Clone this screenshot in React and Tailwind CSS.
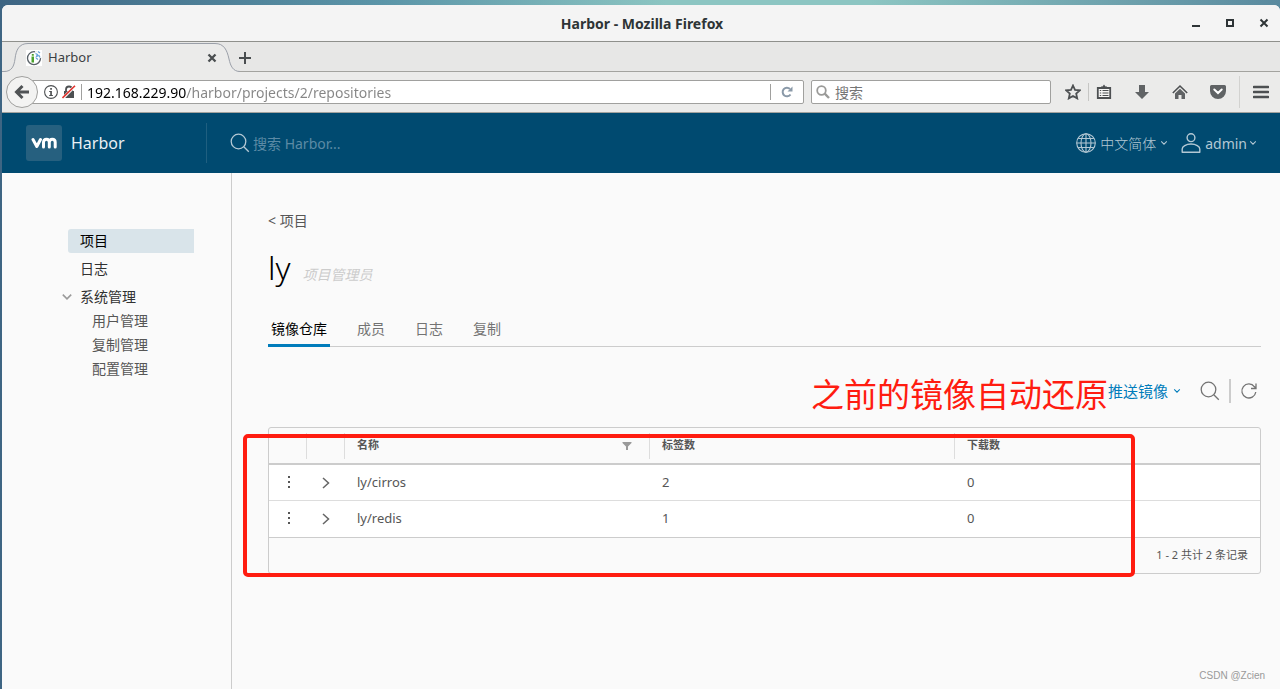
import React from "react";

const CHROME = "font-['Noto_Sans','Noto_Sans_CJK_SC',sans-serif]";

function Chevron({ className = "", dir = "down" }) {
  return dir === "down" ? (
    <svg viewBox="0 0 10 10" className={className} fill="none" stroke="currentColor" strokeWidth="1.300">
      <path d="M1.500 3 L5 6.500 L8.500 3" />
    </svg>
  ) : (
    <svg viewBox="0 0 10 12" className={className} fill="none" stroke="currentColor" strokeWidth="1.500">
      <path d="M2 1 L7.500 6 L2 11" />
    </svg>
  );
}

function SearchIcon({ className }) {
  return (
    <svg viewBox="0 0 20 20" className={className} fill="none" stroke="currentColor" strokeWidth="1.300">
      <circle cx="8.500" cy="8.500" r="7.300" />
      <path d="M13.800 13.800 L18.800 18.800" />
    </svg>
  );
}

function TitleBar() {
  return (
    <div className="grid h-[37px] grid-cols-[1fr_auto_1fr] items-center border-b border-[#8f908c] bg-[#f4f4f4] pr-[10px] pl-3">
      <span />
      <span className="text-[14px] font-bold text-[#2e3436]">Harbor - Mozilla Firefox</span>
      <div className="flex justify-end gap-[22px] text-[#2e3436]">
        <button aria-label="Minimize" className="h-3 w-3">
          <svg viewBox="0 0 12 12" className="h-3 w-3"><path d="M2 8h8v2H2z" fill="currentColor" /></svg>
        </button>
        <button aria-label="Maximize" className="h-3 w-3">
          <svg viewBox="0 0 12 12" className="h-3 w-3"><path d="M3 3h6v6H3z" fill="none" stroke="currentColor" strokeWidth="2" /></svg>
        </button>
        <button aria-label="Close" className="h-3 w-3">
          <svg viewBox="0 0 12 12" className="h-3 w-3"><path d="M2.500 2.500l7 7M9.500 2.500l-7 7" stroke="currentColor" strokeWidth="2" /></svg>
        </button>
      </div>
    </div>
  );
}

function TabStrip() {
  return (
    <div className="flex h-[30px] items-stretch border-b border-[#a3a39f] bg-[#e7e7e6]">
      <div className="relative -mb-px w-[237px]">
        <svg viewBox="0 0 238 30" className="absolute inset-0 h-[30px] w-[238px]">
          <path d="M0 30V29.500H2C10 29.500 12 24 13 17C14 8 17 1.500 26 1.500H213C222 1.500 225 8 227 17C228.500 24 231 29.500 238 29.500V30Z" fill="#ebebea" />
          <path d="M0 29.500H2C10 29.500 12 24 13 17C14 8 17 1.500 26 1.500H213C222 1.500 225 8 227 17C228.500 24 231 29.500 238 29.500" fill="none" stroke="#9a9fa8" />
        </svg>
        <div className="relative flex h-[32px] items-center pr-[22px] pl-6">
          <svg viewBox="0 0 16 16" className="h-4 w-4">
            <path d="M0 0h16v16H0z" fill="#fff" />
            <circle cx="8" cy="8.200" r="6.500" fill="none" stroke="#596168" strokeWidth="1.300" />
            <path d="M9 1l6 1v6l-5 1z" fill="#fff" />
            <path d="M9.500 3.500l2 1-1 2 2.500-1 1 2M12 1.500l2 1.500M10 8l2 1.500" stroke="#6aa5d9" strokeWidth="1.300" fill="none" />
            <path d="M5.500 6.500h2.500v6H5.500zM5.800 4h2v1.700h-2z" fill="#4da32f" />
          </svg>
          <span className="ml-[6px] flex-1 text-[13px] text-[#3b4043]">Harbor</span>
          <button aria-label="Close tab" className="text-[#4a4e50]">
            <svg viewBox="0 0 10 10" className="h-[10px] w-[10px]"><path d="M1.500 1.500l7 7M8.500 1.500l-7 7" stroke="currentColor" strokeWidth="2.300" /></svg>
          </button>
        </div>
      </div>
      <button aria-label="New tab" className="flex items-center pt-[3px] text-[#4a4e50]">
        <svg viewBox="0 0 12 12" className="h-3 w-3"><path d="M6 0v12M0 6h12" stroke="currentColor" strokeWidth="2" /></svg>
      </button>
    </div>
  );
}

function ToolButton({ label, children }) {
  return (
    <button aria-label={label} className="text-[#4d5052]">
      <svg viewBox="0 0 16 16" className="h-4 w-4">{children}</svg>
    </button>
  );
}

function NavBar() {
  return (
    <div className="flex h-[41px] items-center border-b border-[#a3a39f] bg-[#ebebea] pr-[11px] pl-1">
      <button aria-label="Back" className="z-10 flex h-8 w-8 shrink-0 items-center justify-center rounded-full border border-[#a0a09e] bg-[#f3f3f2] text-[#505355]">
        <svg viewBox="0 0 16 16" className="h-4 w-4"><path d="M8.500 2L2.500 8l6 6M2.500 8h12.500" fill="none" stroke="currentColor" strokeWidth="3" /></svg>
      </button>
      <div className="-ml-2 flex h-6 min-w-0 flex-1 items-center rounded-r-xs border border-[#a0a09e] bg-white pl-[13px]">
        <svg viewBox="0 0 14 14" className="h-[14px] w-[14px] shrink-0 text-[#4d5052]">
          <circle cx="7" cy="7" r="6.400" fill="none" stroke="currentColor" strokeWidth="1.100" />
          <path d="M6.200 3h1.700v1.700H6.200zM5.200 6h2.700v4h1v1H5.200v-1h1V7h-1z" fill="currentColor" />
        </svg>
        <svg viewBox="0 0 14 14" className="ml-1 h-[14px] w-[14px] shrink-0">
          <path d="M2 6h10v7H2z" fill="#4d5052" />
          <path d="M4 6V4.500a3 3 0 0 1 6 0V6" fill="none" stroke="#4d5052" strokeWidth="1.800" />
          <path d="M.5 13.500L13 1" stroke="#fff" strokeWidth="3" />
          <path d="M.5 13L13 .8" stroke="#e0322c" strokeWidth="1.600" />
        </svg>
        <div className="mx-[5px] h-4 w-px shrink-0 bg-[#a0a09e]" />
        <input
          aria-label="Address"
          defaultValue="192.168.229.90/harbor/projects/2/repositories"
          className="min-w-0 flex-1 bg-[linear-gradient(90deg,#000_99px,#858585_99px)] bg-clip-text text-[14px] text-transparent outline-none"
        />
        <div className="h-4 w-px bg-[#a0a09e]" />
        <button aria-label="Reload" className="flex w-8 justify-center text-[#8a99a8]">
          <svg viewBox="0 0 12 12" className="h-3 w-3">
            <path d="M9.500 8.500A4.300 4.300 0 1 1 9 3" fill="none" stroke="currentColor" strokeWidth="2" />
            <path d="M11.500 .5V5.500H6.500z" fill="currentColor" />
          </svg>
        </button>
      </div>
      <label className="ml-[7px] flex h-6 w-[240px] shrink-0 items-center rounded-xs border border-[#a0a09e] bg-white pl-1">
        <svg viewBox="0 0 14 14" className="h-[14px] w-[14px] text-[#9a9a98]">
          <circle cx="5.500" cy="5.500" r="4.300" fill="none" stroke="currentColor" strokeWidth="1.800" />
          <path d="M8.700 8.700L13 13" stroke="currentColor" strokeWidth="2.400" />
        </svg>
        <input aria-label="搜索" placeholder="搜索" className="ml-[5px] min-w-0 flex-1 text-[14px] text-[#333] outline-none placeholder:text-[#757575]" />
      </label>
      <div className="ml-[14px] flex shrink-0 items-center">
        <ToolButton label="Bookmark this page">
          <path d="M8 1.500l2 4.400 4.800.5-3.600 3.200 1 4.800L8 12l-4.200 2.400 1-4.800L1.200 6.400 6 5.900z" fill="none" stroke="currentColor" strokeWidth="1.800" />
        </ToolButton>
        <div className="mr-[7px] ml-[7px] h-[18px] w-px bg-[#c6c6c4]" />
        <ToolButton label="Show bookmarks">
          <path d="M1.800 4h12.400v10H1.800z" fill="#f6f6f5" stroke="currentColor" strokeWidth="1.800" />
          <path d="M5 4V2.500h1.500L8 .5l1.500 2H11V4z" fill="currentColor" />
          <path d="M3.800 6.500h1.400M3.800 9h1.400M3.800 11.500h1.400M6.500 6.500h6M6.500 9h6M6.500 11.500h6" stroke="currentColor" strokeWidth="1.200" />
        </ToolButton>
        <div className="ml-[22px] flex gap-[22px]">
          <ToolButton label="Downloads">
            <path d="M5 1h6v7h4l-7 7-7-7h4z" fill="#606365" />
          </ToolButton>
          <ToolButton label="Home">
            <path d="M.8 9L8 2l7.200 7" fill="none" stroke="currentColor" strokeWidth="1.600" />
            <path d="M3 9.500l5-4.800 5 4.800V15H9.500v-4h-3v4H3z" fill="#606365" />
          </ToolButton>
          <ToolButton label="Pocket">
            <path d="M1.500 1h13a1.500 1.500 0 0 1 1.500 1.500V7a8 8 0 0 1-16 0V2.500A1.500 1.500 0 0 1 1.500 1z" fill="#606365" />
            <path d="M4.300 5.500L8 9l3.700-3.500" fill="none" stroke="#fff" strokeWidth="2" strokeLinecap="round" />
          </ToolButton>
        </div>
        <div className="mr-[13px] ml-[13px] h-8 w-px bg-[#d2d2d0]" />
        <ToolButton label="Open menu">
          <path d="M1 3h14M1 8h14M1 13h14" stroke="currentColor" strokeWidth="2.600" strokeLinecap="round" />
        </ToolButton>
      </div>
    </div>
  );
}

function AppHeader() {
  return (
    <header className="flex h-[60px] items-center bg-[#004a70] pr-[23px] pl-6 text-[#b3c8d4]">
      <div className="flex w-[180px] items-center">
        <div className="flex h-9 w-9 items-center justify-center rounded-[3px] bg-[#26607f]">
          <svg viewBox="0 0 26 12" className="h-3 w-[26px]" fill="none" stroke="#fff" strokeWidth="3" strokeLinecap="round" strokeLinejoin="round">
            <path d="M2 2.500L5.800 9.500L9.500 2.500M12.500 10V5.200Q12.500 2.200 15.500 2.200Q18.300 2.200 18.300 5.200V10M18.300 5.200Q18.300 2.200 21.300 2.200Q24.200 2.200 24.200 5.200V10" />
          </svg>
        </div>
        <a href="#home" className="ml-[9px] text-[16px] text-[#e9f0f4]">Harbor</a>
      </div>
      <div className="h-10 w-px bg-[#1f5f80]" />
      <label className="ml-[23px] flex flex-1 items-center">
        <SearchIcon className="h-5 w-5" />
        <input aria-label="搜索 Harbor" placeholder="搜索 Harbor..." className="ml-[3px] w-[200px] text-[14px] outline-none placeholder:text-[#5c8aa5]" />
      </label>
      <button aria-haspopup="menu" className="flex items-center text-[14px]">
        <svg viewBox="0 0 20 20" className="mr-1 h-5 w-5" fill="none" stroke="currentColor" strokeWidth="1.100">
          <circle cx="10" cy="10" r="9.300" />
          <ellipse cx="10" cy="10" rx="5" ry="9.300" />
          <path d="M10 .7v18.600M.7 10h18.600M2.200 5.500h15.600M2.200 14.500h15.600" />
        </svg>
        <span className="font-light">中文简体</span>
        <Chevron className="ml-1 h-2 w-2" />
      </button>
      <button aria-haspopup="menu" className="ml-[13px] flex items-center text-[14px]">
        <svg viewBox="0 0 20 20" className="mr-1 h-5 w-5" fill="none" stroke="currentColor" strokeWidth="1.400">
          <circle cx="10" cy="4.700" r="3.900" />
          <path d="M1.200 19.300V16C1.200 13.500 5 11 10 11S18.800 13.500 18.800 16V19.300z" strokeLinejoin="round" />
        </svg>
        <span>admin</span>
        <Chevron className="ml-[2px] h-2 w-2" />
      </button>
    </header>
  );
}

function Sidebar() {
  return (
    <nav className="w-[230px] shrink-0 border-r border-[#ccc] pt-14 pr-[37px] pl-[66px] text-[14px] leading-6 text-[#313131]">
      <a href="#projects" className="block rounded-l-[3px] bg-[#d9e4ea] pl-3 text-black">项目</a>
      <a href="#logs" className="mt-1 block pl-3">日志</a>
      <div className="relative mt-1">
        <button aria-expanded="true" className="block pl-3">
          <Chevron className="absolute top-[6px] -left-[7px] h-3 w-3 text-[#9a9a9a]" />
          系统管理
        </button>
        <div className="pl-6 text-[#565656]">
          <a href="#users" className="block">用户管理</a>
          <a href="#replications" className="block">复制管理</a>
          <a href="#config" className="block">配置管理</a>
        </div>
      </div>
    </nav>
  );
}

const repositories = [
  { name: "ly/cirros", tags: 2, pulls: 0 },
  { name: "ly/redis", tags: 1, pulls: 0 },
];

function HeadCell({ children, last }) {
  return (
    <th className="border-b-2 border-[#ccc] p-0 text-left">
      <div className={`flex h-[26px] items-center justify-between pl-3 ${last ? "" : "border-r border-[#ddd] pr-[17px]"}`}>{children}</div>
    </th>
  );
}

function RepositoryTable() {
  return (
    <div className="relative mt-6">
      <div className="rounded-[3px] border border-[#ccc]">
        <table className="w-full table-fixed border-separate border-spacing-0 text-[#565656]">
          <colgroup>
            <col className="w-[38px]" />
            <col className="w-[38px]" />
            <col />
            <col />
            <col />
          </colgroup>
          <thead className="text-[11px] font-bold">
            <tr className="h-[37px]">
              <HeadCell />
              <HeadCell />
              <HeadCell>
                名称
                <button aria-label="Filter" className="text-[#9a9a9a]">
                  <svg viewBox="0 0 10 10" className="h-[10px] w-[10px]"><path d="M.5 1h9v1L6 5.500V9H4V5.500L.5 2z" fill="currentColor" /></svg>
                </button>
              </HeadCell>
              <HeadCell>标签数</HeadCell>
              <HeadCell last>下载数</HeadCell>
            </tr>
          </thead>
          <tbody className="text-[13px] [&>tr:first-child>td]:border-b">
            {repositories.map((repo) => (
              <tr key={repo.name} className="h-9 bg-white [&>td]:border-[#ddd] [&>td]:p-0">
                <td>
                  <button aria-label={`Actions for ${repo.name}`} className="ml-[18px] block">
                    <svg viewBox="0 0 4 14" className="h-[14px] w-1"><path d="M1 0h2v2H1zM1 5h2v2H1zM1 10h2v2H1z" fill="#565656" /></svg>
                  </button>
                </td>
                <td>
                  <button aria-label={`Expand ${repo.name}`} className="ml-[14px] block text-[#666]">
                    <Chevron dir="right" className="h-3 w-[10px]" />
                  </button>
                </td>
                <td><a href="#repository" className="pl-3">{repo.name}</a></td>
                <td><span className="pl-3">{repo.tags}</span></td>
                <td><span className="pl-3">{repo.pulls}</span></td>
              </tr>
            ))}
          </tbody>
        </table>
        <div className="flex h-9 items-center justify-end border-t border-[#ccc] pr-3 text-[11px] text-[#565656]">1 - 2 共计 2 条记录</div>
      </div>
      <div className="pointer-events-none absolute top-[7px] right-[126px] -bottom-[3px] -left-[25px] rounded-[5px] border-4 border-[#ff1c10]" />
    </div>
  );
}

function Main() {
  const idle = "h-9 px-[3px]";
  return (
    <main className="min-w-0 flex-1 pt-9 pr-[19px] pl-9 text-[14px]">
      <a href="#projects" className="block text-[14px] leading-6 text-[#565656]">&lt; 项目</a>
      <div className="mt-4 flex h-[37px] items-baseline">
        <h1 className="text-[32px] leading-[38px] font-light text-black">ly</h1>
        <span className="ml-3 text-[14px] text-[#ccc] italic">项目管理员</span>
      </div>
      <div className="mt-6 flex gap-6 border-b border-[#ccc] text-[#737373]" role="tablist">
        <button role="tab" aria-selected="true" className="-mb-px h-[37px] border-b-[3px] border-[#007cbb] px-[3px] pt-[2px] text-black">镜像仓库</button>
        <button role="tab" className={idle}>成员</button>
        <button role="tab" className={idle}>日志</button>
        <button role="tab" className={idle}>复制</button>
      </div>
      <div className="mt-8 flex h-6 items-center justify-end pr-[3px]">
        <span className="pt-2 text-[33px] leading-6 text-[#ff1c10]">之前的镜像自动还原</span>
        <button aria-haspopup="menu" className="flex items-center text-[15px] text-[#007cbb]">
          推送镜像
          <Chevron className="ml-[5px] h-2 w-2" />
        </button>
        <button aria-label="搜索" className="ml-[19px] text-[#737373]"><SearchIcon className="h-5 w-5" /></button>
        <div className="ml-[9px] h-6 w-[2px] bg-[#ccc]" />
        <button aria-label="Refresh" className="ml-[9px] text-[#737373]">
          <svg viewBox="0 0 18 18" className="h-[18px] w-[18px]" fill="none" stroke="currentColor" strokeWidth="1.300">
            <path d="M15.800 10A7 7 0 1 1 14.500 4.800L16 6.300M16 1.500V6.500H11" />
          </svg>
        </button>
      </div>
      <RepositoryTable />
    </main>
  );
}

export default function App() {
  return (
    <div className={`relative flex min-h-screen flex-col bg-[linear-gradient(90deg,#3e6583_0%,#5b95a8_30%,#8cc5c2_52%,#8cc5c2_68%,#5a8a9f_100%)] pt-[5px] pl-[2px] ${CHROME}`}>
      <div className="flex flex-1 flex-col overflow-hidden rounded-t-md bg-[#fafafa]">
        <TitleBar />
        <TabStrip />
        <NavBar />
        <AppHeader />
        <div className="flex flex-1">
          <Sidebar />
          <Main />
        </div>
      </div>
      <div className="absolute right-[15px] bottom-[6px] font-['Liberation_Sans',sans-serif] text-[10px] text-[#999]">CSDN @Zcien</div>
    </div>
  );
}
